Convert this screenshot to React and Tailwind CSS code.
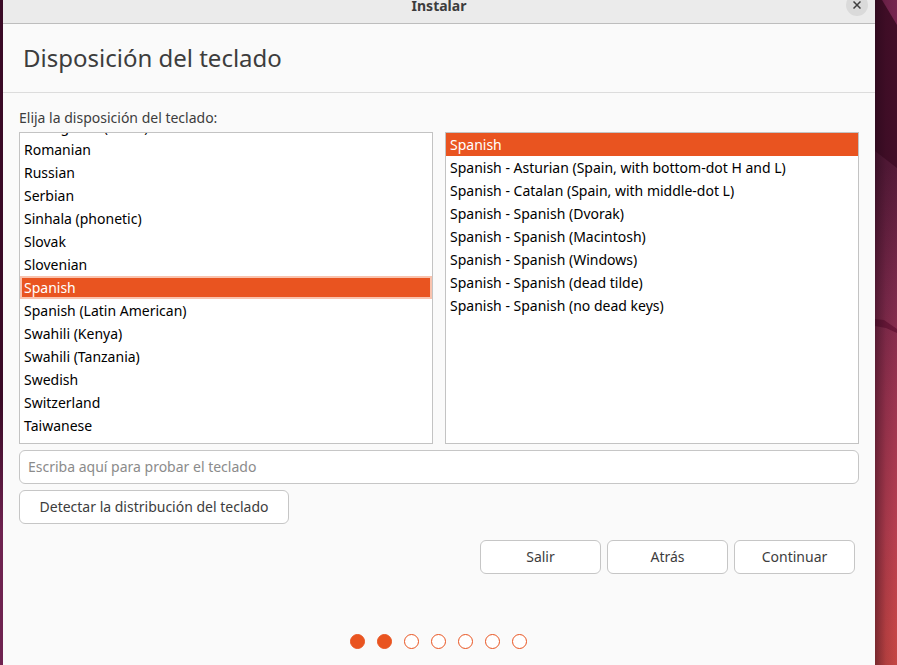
import { useState } from "react";

const layouts = [
  "Portuguese (Brazil)",
  "Romanian",
  "Russian",
  "Serbian",
  "Sinhala (phonetic)",
  "Slovak",
  "Slovenian",
  "Spanish",
  "Spanish (Latin American)",
  "Swahili (Kenya)",
  "Swahili (Tanzania)",
  "Swedish",
  "Switzerland",
  "Taiwanese",
  "Tajik",
];

const variants = [
  "Spanish",
  "Spanish - Asturian (Spain, with bottom-dot H and L)",
  "Spanish - Catalan (Spain, with middle-dot L)",
  "Spanish - Spanish (Dvorak)",
  "Spanish - Spanish (Macintosh)",
  "Spanish - Spanish (Windows)",
  "Spanish - Spanish (dead tilde)",
  "Spanish - Spanish (no dead keys)",
];

function LayoutList({ label, items, initial, scrolled, focused }) {
  const [selected, setSelected] = useState(initial);
  const ring = focused ? "inset-ring-2 inset-ring-[#f9c3ae]" : "";
  return (
    <div className="h-[312px] min-w-0 flex-1 overflow-hidden border border-[#c3c3c3] bg-white">
      <ul role="listbox" aria-label={label} className={scrolled ? "-mt-[18px]" : ""}>
        {items.map((item) => (
          <li
            key={item}
            role="option"
            aria-selected={item === selected}
            onClick={() => setSelected(item)}
            className={`h-[23px] truncate px-1 leading-[23px] ${
              item === selected ? `bg-[#e95420] text-white ${ring}` : "text-black"
            }`}
          >
            {item}
          </li>
        ))}
      </ul>
    </div>
  );
}

function Button({ children, wide }) {
  return (
    <button
      type="button"
      className={`h-[34px] rounded-md border border-[#c6c6c6] bg-white pb-[2px] text-[#3d3d3d] ${
        wide ? "w-[270px]" : "w-[121px]"
      }`}
    >
      {children}
    </button>
  );
}

function Wallpaper() {
  return (
    <svg className="h-full w-[22px] shrink-0" viewBox="0 0 22 665" preserveAspectRatio="none" aria-hidden="true">
      <defs>
        <linearGradient id="dusk" x1="0" y1="0" x2="0" y2="1">
          <stop offset="0" stopColor="#551a38" />
          <stop offset="0.25" stopColor="#551a38" />
          <stop offset="0.45" stopColor="#7e2a4c" />
          <stop offset="0.6" stopColor="#9c3450" />
          <stop offset="0.8" stopColor="#b83f50" />
          <stop offset="0.95" stopColor="#c64547" />
          <stop offset="1" stopColor="#c54644" />
        </linearGradient>
        <linearGradient id="shade" x1="0" y1="0" x2="1" y2="0">
          <stop offset="0" stopColor="#1c0614" stopOpacity="0.45" />
          <stop offset="0.5" stopColor="#1c0614" stopOpacity="0.12" />
          <stop offset="1" stopColor="#1c0614" stopOpacity="0" />
        </linearGradient>
      </defs>
      <rect width="22" height="665" fill="url(#dusk)" />
      <path d="M0 0H22V168L0 151Z" fill="#430e28" />
      <path d="M7 0H22V25Z" fill="#77254f" />
      <path d="M0 319L9 320L22 329V333L11 328L0 326Z" fill="#6b1839" />
      <rect width="22" height="665" fill="url(#shade)" />
    </svg>
  );
}

export default function App() {
  return (
    <div className="flex h-screen overflow-hidden font-['Noto_Sans',sans-serif] text-[14px] text-[#3d3d3d]">
      <div className="w-[3px] shrink-0 bg-linear-to-b from-[#3a0a26] from-60% to-[#6f2350] to-80%" />
      <main className="flex min-w-0 flex-1 flex-col bg-[#fafafa]">
        <header className="flex h-6 shrink-0 items-start border-b border-[#bdbdbd] bg-[#ebebeb] pr-[7px]">
          <span className="w-[29px]" />
          <h1 className="flex-1 text-center font-bold leading-3">Instalar</h1>
          <button
            type="button"
            aria-label="Cerrar"
            className="-mt-[6px] flex size-[22px] items-center justify-center rounded-full bg-[#dadada]"
          >
            <svg width="8" height="8" viewBox="0 0 8 8" stroke="#3d3d3d" strokeWidth="1.5" aria-hidden="true">
              <path d="M0.5 0.5L7.5 7.5M7.5 0.5L0.5 7.5" />
            </svg>
          </button>
        </header>
        <div className="flex h-[69px] shrink-0 items-center border-b border-[#dcdcdc] px-5">
          <h2 className="text-2xl">Disposición del teclado</h2>
        </div>
        <form className="flex flex-1 flex-col px-4 pt-[15px]" onSubmit={(e) => e.preventDefault()}>
          <p className="pb-1 leading-5">Elija la disposición del teclado:</p>
          <div className="flex gap-3">
            <LayoutList label="Disposición del teclado" items={layouts} initial="Spanish" scrolled focused />
            <LayoutList label="Variante del teclado" items={variants} initial="Spanish" />
          </div>
          <input
            type="text"
            aria-label="Probar el teclado"
            placeholder="Escriba aquí para probar el teclado"
            className="mt-[6px] h-[34px] w-full rounded-md border border-[#c6c6c6] bg-white px-2 pb-[2px] outline-none placeholder:text-[#8b8b8b]"
          />
          <div className="mt-[6px]">
            <Button wide>Detectar la distribución del teclado</Button>
          </div>
          <div className="mt-4 flex justify-end gap-[6px] pr-1">
            <Button>Salir</Button>
            <Button>Atrás</Button>
            <Button>Continuar</Button>
          </div>
          <div className="mt-[60px] flex justify-center gap-3 pr-[2px]" role="img" aria-label="Paso 2 de 7">
            {[1, 2, 3, 4, 5, 6, 7].map((step) => (
              <span
                key={step}
                className={`size-[15px] rounded-full border border-[#e95420] ${step <= 2 ? "bg-[#e95420]" : "bg-white"}`}
              />
            ))}
          </div>
        </form>
      </main>
      <Wallpaper />
    </div>
  );
}
